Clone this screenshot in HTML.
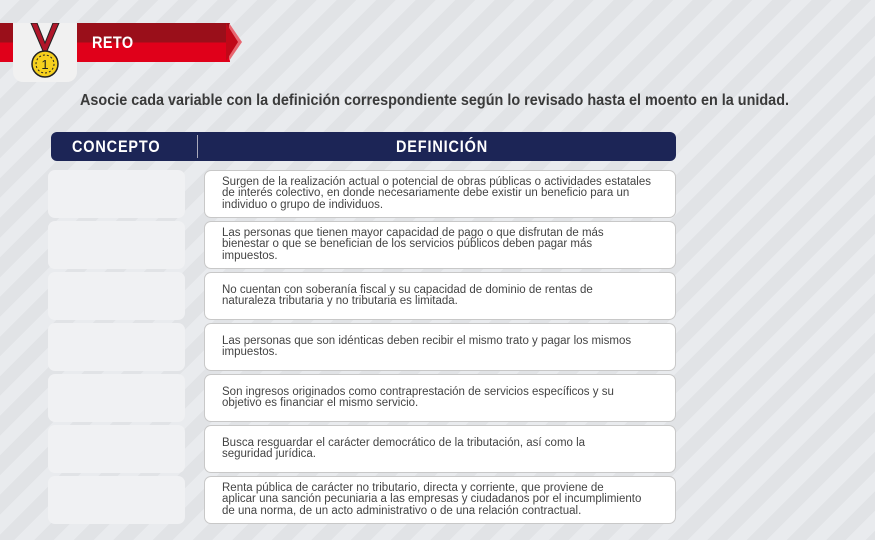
<!DOCTYPE html>
<html><head><meta charset="utf-8"><style>
*{margin:0;padding:0;box-sizing:border-box}
body{width:875px;height:540px;overflow:hidden;position:relative;font-family:"Liberation Sans",sans-serif;
background:repeating-linear-gradient(135deg,#e9ebee 0 14px,#e1e3e6 14px 28px);}
.bar{position:absolute;left:0;top:23px;width:230px;height:39px;background:linear-gradient(#9a0f1a 0 50%,#e0001a 50%)}
.arr{position:absolute;left:229px;top:23px;width:0;height:0;border-top:19.5px solid transparent;border-bottom:19.5px solid transparent;border-left:13px solid #e86670}
.arr2{position:absolute;left:226px;top:23px;width:0;height:0;border-top:19.5px solid transparent;border-bottom:19.5px solid transparent;border-left:12px solid #c00818}
.reto{position:absolute;left:92px;top:33px;color:#fff;font-weight:bold;font-size:17px;letter-spacing:0.5px;transform:scaleX(.85);transform-origin:left}
.icon{position:absolute;left:13px;top:23px;width:64px;height:59px;background:#f1f1f1;border-radius:0 0 10px 10px}
.q{position:absolute;left:80px;top:92px;font-size:16px;color:#3a3a3a;font-weight:bold;transform:scaleX(.9);transform-origin:left;white-space:nowrap}
.hd{position:absolute;left:51px;top:132px;width:625px;height:29px;background:#1c2556;border-radius:6px;color:#fff;font-weight:bold;font-size:17px}
.hd span{position:absolute;top:5px;transform:scaleX(.85);transform-origin:left;letter-spacing:1px}
.dv{position:absolute;left:146px;top:3px;width:1px;height:23px;background:#aab}
.l{position:absolute;left:48px;width:137px;height:48px;background:#f0f1f3;border-radius:7px}
.r{position:absolute;left:204px;width:472px;height:48px;background:#fff;border:1px solid #c8c8c8;border-radius:7px;font-size:11.5px;line-height:11.5px;color:#444;padding:0 5px 0 17px;display:flex;align-items:center;white-space:nowrap}
</style></head><body>
<div class="bar"></div><div class="arr"></div><div class="arr2"></div>
<div class="reto">RETO</div>
<div class="icon"><svg width="64" height="59" viewBox="0 0 64 59">
<path d="M18 0 L30 28 L34 28 L46 0 L40 0 L32 20 L24 0Z" fill="#b0162a" stroke="#222" stroke-width="1"/>
<circle cx="32" cy="41" r="13" fill="#f6d01d" stroke="#222" stroke-width="1.5"/>
<circle cx="32" cy="41" r="9" fill="none" stroke="#222" stroke-width="1" stroke-dasharray="2 2"/>
<text x="32" y="46" font-size="13" text-anchor="middle" font-family="Liberation Sans" fill="#222">1</text></svg></div>
<div class="q">Asocie cada variable con la definición correspondiente según lo revisado hasta el moento en la unidad.</div>
<div class="hd"><span style="left:21px">CONCEPTO</span><div class="dv"></div><span style="left:345px">DEFINICIÓN</span></div>
<div class="l" style="top:170px"></div><div class="r" style="top:170px"><div>Surgen de la realización actual o potencial de obras públicas o actividades estatales<br>de interés colectivo, en donde necesariamente debe existir un beneficio para un<br>individuo o grupo de individuos.</div></div>
<div class="l" style="top:221px"></div><div class="r" style="top:221px"><div>Las personas que tienen mayor capacidad de pago o que disfrutan de más<br>bienestar o que se benefician de los servicios públicos deben pagar más<br>impuestos.</div></div>
<div class="l" style="top:272px"></div><div class="r" style="top:272px"><div>No cuentan con soberanía fiscal y su capacidad de dominio de rentas de<br>naturaleza tributaria y no tributaria es limitada.</div></div>
<div class="l" style="top:323px"></div><div class="r" style="top:323px"><div>Las personas que son idénticas deben recibir el mismo trato y pagar los mismos<br>impuestos.</div></div>
<div class="l" style="top:374px"></div><div class="r" style="top:374px"><div>Son ingresos originados como contraprestación de servicios específicos y su<br>objetivo es financiar el mismo servicio.</div></div>
<div class="l" style="top:425px"></div><div class="r" style="top:425px"><div>Busca resguardar el carácter democrático de la tributación, así como la<br>seguridad jurídica.</div></div>
<div class="l" style="top:476px"></div><div class="r" style="top:476px"><div>Renta pública de carácter no tributario, directa y corriente, que proviene de<br>aplicar una sanción pecuniaria a las empresas y ciudadanos por el incumplimiento<br>de una norma, de un acto administrativo o de una relación contractual.</div></div>
</body></html>
